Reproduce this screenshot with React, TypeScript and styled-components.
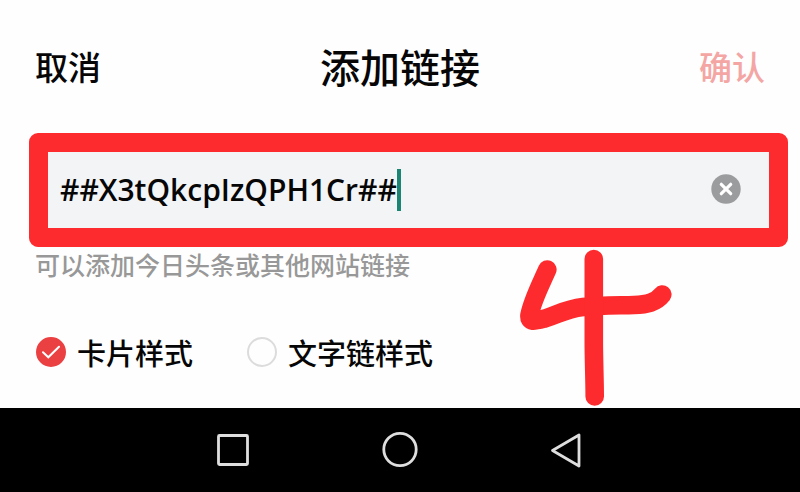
import React, { useState } from "react";
import styled, { createGlobalStyle } from "styled-components";

const GlobalStyle = createGlobalStyle`
  *, *::before, *::after { box-sizing: border-box; }
  body {
    margin: 0;
    background: #fefefe;
    color: #060606;
    font-family: "Noto Sans CJK SC", sans-serif;
    font-weight: 500;
  }
  button, input { font: inherit; color: inherit; }
`;

const Screen = styled.div`
  display: flex;
  flex-direction: column;
  min-height: 100vh;
`;

const Sheet = styled.main`
  position: relative;
  flex: 1;
`;

const Header = styled.header`
  display: grid;
  grid-template-columns: 1fr auto 1fr;
  align-items: center;
  padding: 36px 35px 37px;
`;

const Title = styled.h1`
  margin: 0;
  font-size: 40px;
  font-weight: 500;
  line-height: 60px;
`;

const HeaderButton = styled.button<{ $end?: boolean }>`
  justify-self: ${({ $end }) => ($end ? "end" : "start")};
  padding: 0;
  border: 0;
  background: none;
  font-size: 33px;
  line-height: 60px;
  color: ${({ $end }) => ($end ? "#f4a6a4" : "#060606")};
`;

const Field = styled.div`
  display: flex;
  align-items: center;
  height: 114px;
  margin: 0 12px 0 29px;
  padding: 0 28px 0 12px;
  border: 19px solid #fd2b2d;
  border-radius: 9px;
  background: #f3f4f6;
`;

const LinkInput = styled.input`
  field-sizing: content;
  min-width: 0;
  padding: 0;
  border: 0;
  outline: 0;
  background: none;
  font-family: "Open Sans", "Noto Sans CJK SC", sans-serif;
  font-size: 30px;
  font-weight: 600;
  line-height: 42px;
`;

const Caret = styled.span`
  flex: none;
  width: 4px;
  height: 42px;
  background: #1b8473;
`;

const ClearButton = styled.button`
  display: flex;
  margin-left: auto;
  padding: 0;
  border: 0;
  background: none;
`;

const Hint = styled.p`
  margin: 0;
  padding: 0 35px;
  font-size: 25px;
  line-height: 34px;
  color: #989898;
`;

const Options = styled.div`
  display: flex;
  gap: 54px;
  padding: 49px 36px 34px;
`;

const Option = styled.label`
  display: flex;
  align-items: center;
  gap: 11px;
  font-size: 29px;
  line-height: 44px;
  white-space: nowrap;
`;

const Radio = styled.span`
  display: grid;
  width: 30px;
  height: 30px;

  > * { grid-area: 1 / 1; }
`;

const RadioInput = styled.input`
  appearance: none;
  width: 30px;
  height: 30px;
  margin: 0;
  border: 2px solid #dcdcdc;
  border-radius: 50%;
  background: #fefefe;

  &:checked {
    border-color: #eb4042;
    background: #eb4042;
  }
`;

const Tick = styled.svg`
  z-index: 1;
  pointer-events: none;
`;

const Mark = styled.svg`
  position: absolute;
  top: 249px;
  left: 64.75%;
  pointer-events: none;
`;

const NavBar = styled.nav`
  display: grid;
  grid-template-columns: repeat(3, 1fr);
  height: 84px;
  padding: 0 18.75%;
  background: #000;
`;

const NavButton = styled.button`
  display: flex;
  align-items: center;
  justify-content: center;
  padding: 0;
  border: 0;
  background: none;
`;

const navItems = [
  { label: "最近任务", shape: <rect x="4.5" y="5.5" width="29" height="29" rx="1" /> },
  { label: "主屏幕", shape: <circle cx="19" cy="19.5" r="16.2" /> },
  { label: "返回", shape: <path d="M4.5 20.5 L31 5 V36 Z" /> },
];

const styles = ["卡片样式", "文字链样式"];

export default function App() {
  const [link, setLink] = useState("##X3tQkcpIzQPH1Cr##");
  const [selected, setSelected] = useState(styles[0]);

  return (
    <Screen>
      <GlobalStyle />
      <Sheet>
        <Header>
          <HeaderButton type="button">取消</HeaderButton>
          <Title>添加链接</Title>
          <HeaderButton type="button" $end>确认</HeaderButton>
        </Header>
        <Field>
          <LinkInput
            type="text"
            aria-label="链接"
            value={link}
            onChange={(e) => setLink(e.target.value)}
          />
          <Caret />
          <ClearButton type="button" aria-label="清除" onClick={() => setLink("")}>
            <svg width="30" height="32" viewBox="0 0 30 32" fill="none">
              <circle cx="15" cy="15" r="14.7" fill="#9b9c9e" />
              <path d="M10.3 10.3 L19.7 19.7 M19.7 10.3 L10.3 19.7" stroke="#fff" strokeWidth="3.2" strokeLinecap="round" />
            </svg>
          </ClearButton>
        </Field>
        <Hint>可以添加今日头条或其他网站链接</Hint>
        <Options role="radiogroup" aria-label="样式">
          {styles.map((name) => (
            <Option key={name}>
              <Radio>
                <RadioInput
                  type="radio"
                  name="style"
                  checked={selected === name}
                  onChange={() => setSelected(name)}
                />
                {selected === name && (
                  <Tick width="30" height="30" viewBox="0 0 30 30" fill="none">
                    <path d="M7 15.3 L12.3 20.3 L23 9.7" stroke="#fff" strokeWidth="2" strokeLinecap="round" />
                  </Tick>
                )}
              </Radio>
              {name}
            </Option>
          ))}
        </Options>
        <Mark width="156" height="160" viewBox="0 0 156 160" fill="none" stroke="#fd2b2d" strokeWidth="18.6" strokeLinecap="round" strokeLinejoin="round" aria-hidden="true">
          <path d="M29.3 20.5 C22 37 14.5 51 11.5 66 C10.5 74 17 72 27 69.5 C41 65 48 60 65 58 C80 56.5 98 56.5 116 56 C129 55.5 138 53.5 144.3 45.5" />
          <path d="M75.8 10 V91 C75.8 112 76.7 130 76.7 147.5" />
        </Mark>
      </Sheet>
      <NavBar>
        {navItems.map(({ label, shape }) => (
          <NavButton key={label} type="button" aria-label={label}>
            <svg width="38" height="40" viewBox="0 0 38 40" fill="none" stroke="#dedede" strokeWidth="2.8" strokeLinejoin="round">
              {shape}
            </svg>
          </NavButton>
        ))}
      </NavBar>
    </Screen>
  );
}
